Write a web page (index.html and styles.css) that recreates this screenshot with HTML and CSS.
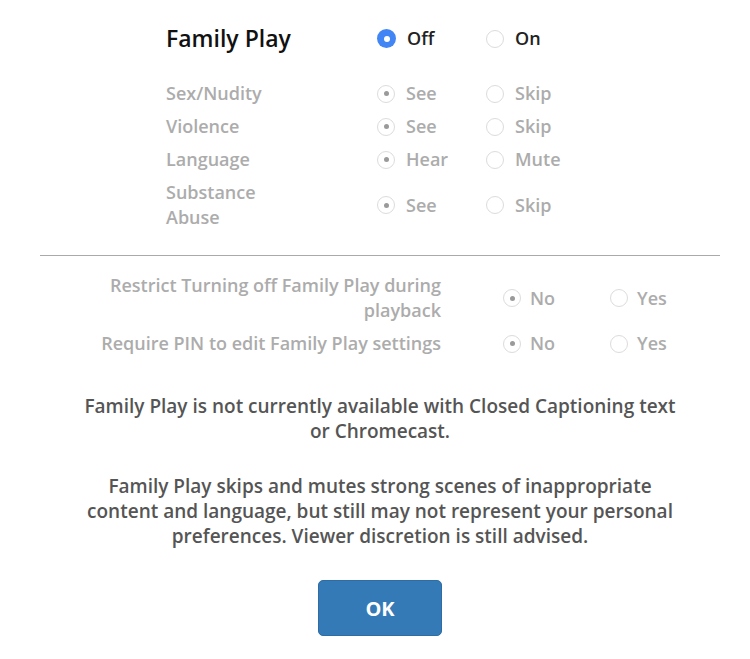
FILE: index.html
```html
<!DOCTYPE html>
<html lang="en">
<head>
<meta charset="utf-8">
<title>Family Play</title>
<link rel="stylesheet" href="styles.css">
</head>
<body>
<div class="modal">
  <div class="prefs">
    <div class="label title">Family Play</div>
    <div class="opt active"><span class="radio selected"></span>Off</div>
    <div class="opt active"><span class="radio"></span>On</div>

    <div class="label">Sex/Nudity</div>
    <div class="opt"><span class="radio checked"></span>See</div>
    <div class="opt"><span class="radio"></span>Skip</div>

    <div class="label">Violence</div>
    <div class="opt"><span class="radio checked"></span>See</div>
    <div class="opt"><span class="radio"></span>Skip</div>

    <div class="label">Language</div>
    <div class="opt"><span class="radio checked"></span>Hear</div>
    <div class="opt"><span class="radio"></span>Mute</div>

    <div class="label">Substance<br>Abuse</div>
    <div class="opt"><span class="radio checked"></span>See</div>
    <div class="opt"><span class="radio"></span>Skip</div>
  </div>

  <hr class="divider">

  <div class="restrict">
    <div class="rlabel">Restrict Turning off Family Play during playback</div>
    <div class="opt"><span class="radio checked"></span>No</div>
    <div class="opt"><span class="radio"></span>Yes</div>

    <div class="rlabel">Require PIN to edit Family Play settings</div>
    <div class="opt"><span class="radio checked"></span>No</div>
    <div class="opt"><span class="radio"></span>Yes</div>
  </div>

  <p class="note note-first">Family Play is not currently available with Closed Captioning text or Chromecast.</p>
  <p class="note note-second">Family Play skips and mutes strong scenes of inappropriate content and language, but still may not represent your personal preferences. Viewer discretion is still advised.</p>

  <div class="actions">
    <button class="ok" type="button">OK</button>
  </div>
</div>
</body>
</html>
```

FILE: styles.css
```css
* { box-sizing: border-box; }

html, body {
  margin: 0;
  padding: 0;
  background: #ffffff;
}

body {
  font-family: "Open Sans", "Lato", "Liberation Sans", sans-serif;
  font-weight: 600;
  width: 750px;
}

.modal {
  width: 680px;
  margin-left: 40px;
  padding-top: 22px;
}

.prefs {
  display: grid;
  grid-template-columns: 211px 109px auto;
  padding-left: 126px;
  font-size: 18px;
  line-height: 25px;
  color: #acacac;
}

.prefs > * {
  padding: 4px 0;
  display: flex;
  align-items: center;
}

.title {
  font-size: 23px;
  color: #111111;
  margin-bottom: 22px;
}

.opt {
  display: flex;
  align-items: center;
  gap: 11px;
}

.prefs .opt.active {
  color: #222222;
  margin-bottom: 22px;
}

.radio {
  flex: none;
  width: 18px;
  height: 18px;
  border-radius: 50%;
  border: 1px solid #dcdcdc;
  background: #ffffff;
  display: flex;
  align-items: center;
  justify-content: center;
}

.radio.checked::after {
  content: "";
  width: 5px;
  height: 5px;
  border-radius: 50%;
  background: #9a9a9a;
}

.radio.selected {
  width: 19px;
  height: 19px;
  border: none;
  background: #4285f4;
}

.radio.selected::after {
  content: "";
  width: 6px;
  height: 6px;
  border-radius: 50%;
  background: #ffffff;
}

.divider {
  border: none;
  border-top: 1px solid #aaaaaa;
  margin: 21px 0 13px;
  height: 0;
}

.restrict {
  display: grid;
  grid-template-columns: 463px 107px auto;
  font-size: 18px;
  line-height: 25px;
  color: #acacac;
}

.restrict > * {
  padding: 4px 0;
  display: flex;
  align-items: center;
}

.restrict > .rlabel {
  justify-content: flex-end;
  text-align: right;
  padding-left: 50px;
  padding-right: 62px;
}

.restrict .opt {
  gap: 9px;
}

.note {
  width: 600px;
  margin: 0 auto;
  text-align: center;
  font-size: 19px;
  line-height: 25px;
  color: #555555;
}

.note-first {
  margin-top: 34px;
}

.note-second {
  margin-top: 30px;
}

.actions {
  display: flex;
  justify-content: center;
  margin-top: 31px;
}

.ok {
  width: 124px;
  height: 56px;
  background: #337ab7;
  border: 1px solid #2e6da4;
  border-radius: 5px;
  color: #ffffff;
  font-family: inherit;
  font-weight: 700;
  font-size: 20px;
}
```
